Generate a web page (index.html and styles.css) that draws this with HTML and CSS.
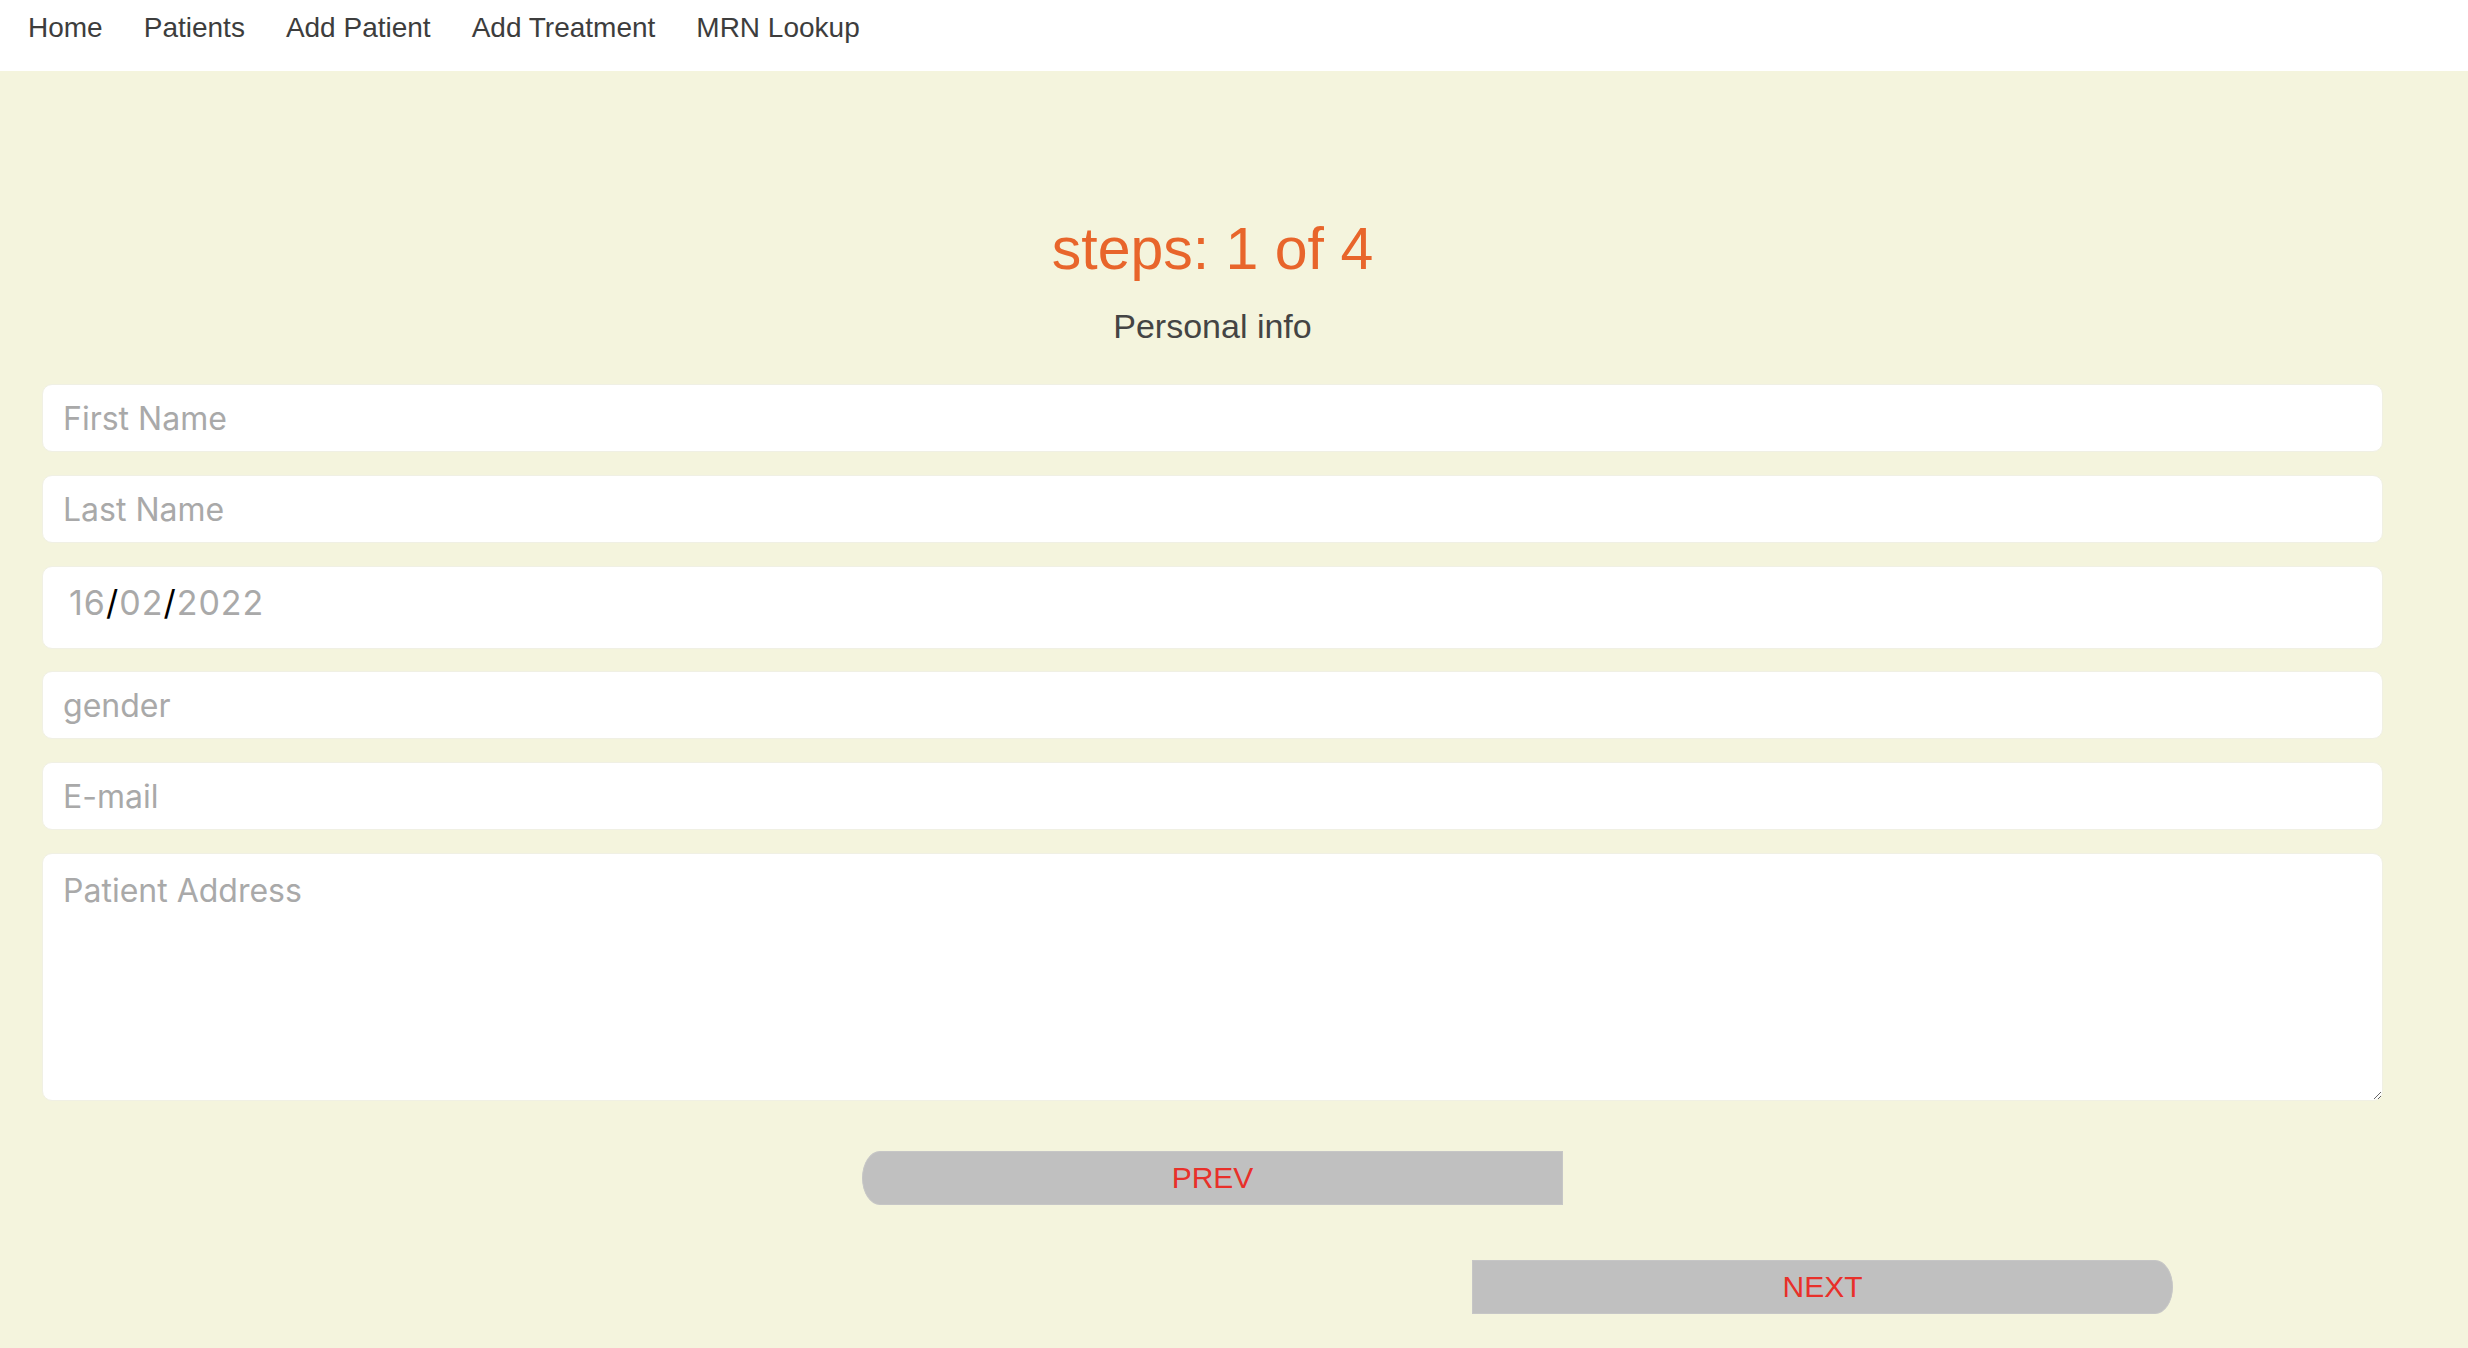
FILE: index.html
```html
<!DOCTYPE html>
<html lang="en">
<head>
<meta charset="utf-8">
<title>Add Patient</title>
<link rel="stylesheet" href="styles.css">
</head>
<body>
<nav class="topnav">
  <a class="navlink" href="#">Home</a>
  <a class="navlink" href="#">Patients</a>
  <a class="navlink" href="#">Add Patient</a>
  <a class="navlink" href="#">Add Treatment</a>
  <a class="navlink" href="#">MRN Lookup</a>
</nav>
<main class="page">
  <form class="wizard">
    <h1 class="steps">steps: 1 of 4</h1>
    <h2 class="section-title">Personal info</h2>
    <input class="field field-first" type="text" placeholder="First Name">
    <input class="field" type="text" placeholder="Last Name">
    <div class="field date-field"><span class="dpart">16</span><span class="dsep">/</span><span class="dpart">02</span><span class="dsep">/</span><span class="dpart">2022</span></div>
    <input class="field" type="text" placeholder="gender">
    <input class="field" type="text" placeholder="E-mail">
    <textarea class="field area" placeholder="Patient Address"></textarea>
    <button class="btn btn-prev" type="button">PREV</button>
    <button class="btn btn-next" type="button">NEXT</button>
  </form>
</main>
</body>
</html>
```

FILE: styles.css
```css
html, body {
  margin: 0;
  padding: 0;
}
body {
  background: #f4f4dd;
  font-family: "Liberation Sans", Arial, sans-serif;
  min-height: 1348px;
}
.topnav {
  background: #ffffff;
  height: 71px;
  display: flex;
  align-items: center;
  gap: 41px;
  padding-left: 28px;
  box-sizing: border-box;
}
.navlink {
  color: #3d3d3d;
  text-decoration: none;
  font-size: 28px;
  line-height: 1;
  position: relative;
  top: -8px;
}
.page {
  padding: 0 85px 0 42px;
}
.wizard {
  display: flex;
  flex-direction: column;
}
.steps {
  margin: 144px 0 0;
  text-align: center;
  font-weight: normal;
  font-size: 59px;
  line-height: 68px;
  color: #e8652b;
}
.section-title {
  margin: 23px 0 0;
  text-align: center;
  font-weight: normal;
  font-size: 34px;
  line-height: 40px;
  color: #444444;
}
.field {
  box-sizing: border-box;
  display: block;
  width: 100%;
  height: 68px;
  margin: 0 0 23px;
  border: 1px solid #f0f0e4;
  border-radius: 10px;
  background: #ffffff;
  padding: 0 20px;
  font-family: "Inter", "Noto Sans", sans-serif;
  font-size: 32px;
  color: #222;
  outline: none;
}
.field-first {
  margin-top: 38px;
}
.field::placeholder {
  color: #a9a9a9;
}
.date-field {
  height: 83px;
  margin-bottom: 22px;
  display: flex;
  align-items: center;
  padding-left: 26px;
  padding-bottom: 10px;
  font-size: 34px;
  letter-spacing: 1px;
}
.dpart {
  color: #a9a9a9;
}
.dsep {
  color: #000000;
}
.area {
  height: 248px;
  padding-top: 17px;
  resize: vertical;
  margin-bottom: 50px;
}
.btn {
  box-sizing: border-box;
  width: 701px;
  height: 54px;
  background: #c0c0c0;
  border: 1px solid #c6c6c6;
  color: #e8302a;
  font-family: "Liberation Sans", Arial, sans-serif;
  font-size: 30px;
  padding: 0;
  cursor: pointer;
}
.btn-prev {
  align-self: center;
  border-radius: 18px 0 0 18px / 27px 0 0 27px;
}
.btn-next {
  margin-top: 55px;
  margin-left: 1430px;
  border-radius: 0 18px 18px 0 / 0 27px 27px 0;
}
```
